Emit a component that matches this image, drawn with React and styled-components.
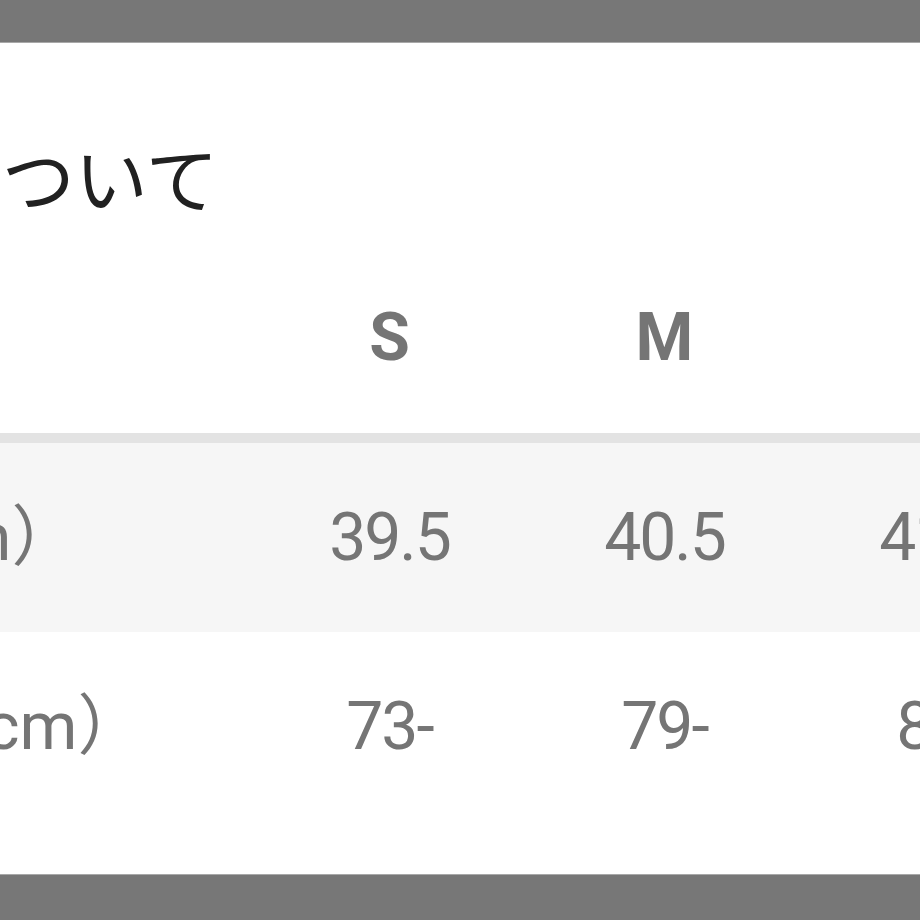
import React from "react";
import styled, { createGlobalStyle } from "styled-components";

const Global = createGlobalStyle`
  html, body { margin: 0; padding: 0; background: #ffffff; }
  body { overflow: hidden; font-family: Roboto, "Noto Sans CJK JP", sans-serif; }
`;

const Page = styled.div`
  width: 920px;
  height: 920px;
  display: flex;
  flex-direction: column;
  overflow: hidden;
  background: #ffffff;
`;

const Bar = styled.div`
  flex: 0 0 ${(p) => p.$h}px;
  background: #777777;
  box-sizing: border-box;
  ${(p) => (p.$top ? "border-bottom" : "border-top")}: 1px solid #a8a8a8;
`;

const Content = styled.div`
  flex: 1;
  margin-left: -345px;
  display: flex;
  flex-direction: column;
`;

const Title = styled.h2`
  margin: 0 0 0 -16px;
  padding: 96px 0 31px;
  font-family: "Noto Sans CJK JP", sans-serif;
  font-weight: 400;
  font-size: 73px;
  line-height: 73px;
  color: #212121;
  white-space: nowrap;
`;

const Table = styled.div`
  display: flex;
  flex-direction: column;
`;

const Row = styled.div`
  display: grid;
  grid-template-columns: 597px repeat(3, 275px);
  align-items: center;
  height: ${(p) => p.$h}px;
  background: ${(p) => (p.$shade ? "#f6f6f6" : "#ffffff")};
  ${(p) => (p.$head ? "border-bottom: 10px solid #e3e3e3;" : "")}
`;

const Label = styled.div`
  font-size: 66px;
  line-height: 1;
  color: #757575;
  white-space: nowrap;
`;

const Cell = styled.div`
  text-align: center;
  font-size: 66px;
  line-height: 1;
  color: #757575;
  font-weight: ${(p) => (p.$bold ? 700 : 400)};
  letter-spacing: ${(p) => (p.$bold ? "0" : "-2px")};
  white-space: nowrap;
`;

const sizes = ["S", "M", "L"];
const rows = [
  { label: "首回り（cm）", values: ["39.5", "40.5", "41.5"], shade: true },
  { label: "ウエスト（cm）", values: ["73-", "79-", "85-"], shade: false },
];

export default function App() {
  return (
    <>
      <Global />
      <Page>
        <Bar $h={43} $top />
        <Content>
          <Title>サイズ表について</Title>
          <Table>
            <Row $h={190} $head>
              <Label />
              {sizes.map((s) => (
                <Cell key={s} $bold>
                  {s}
                </Cell>
              ))}
            </Row>
            {rows.map((r) => (
              <Row key={r.label} $h={189} $shade={r.shade}>
                <Label>{r.label}</Label>
                {r.values.map((v, i) => (
                  <Cell key={i}>{v}</Cell>
                ))}
              </Row>
            ))}
          </Table>
        </Content>
        <Bar $h={46} />
      </Page>
    </>
  );
}
